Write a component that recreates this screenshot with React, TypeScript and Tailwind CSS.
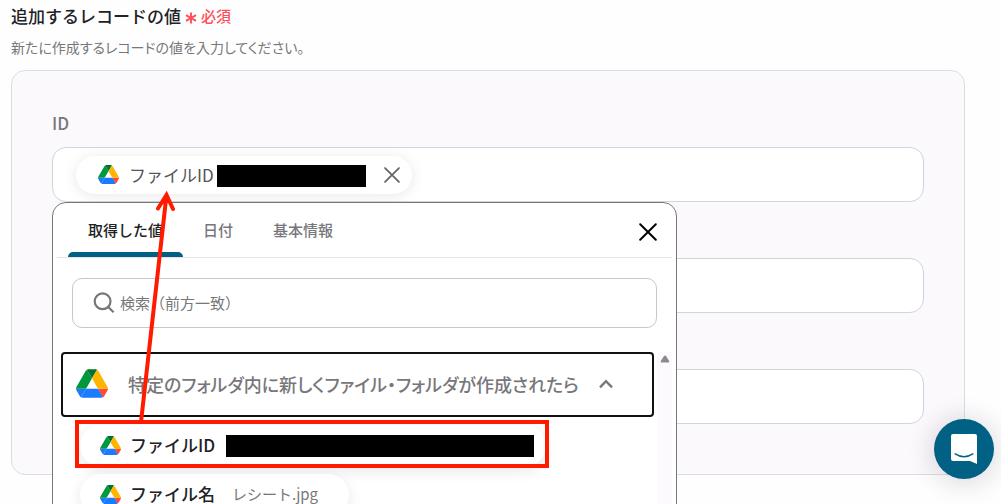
import React from "react";

function DriveIcon({ className }: { className: string }) {
  return (
    <svg viewBox="0 0 87.3 78" className={className} aria-hidden="true">
      <path d="m6.6 66.85 3.85 6.65c.8 1.4 1.95 2.5 3.3 3.3l13.75-23.8h-27.5c0 1.55.4 3.1 1.2 4.5z" fill="#1a7bff" />
      <path d="m43.65 25-13.75-23.8c-1.35.8-2.5 1.9-3.3 3.3l-25.4 44a9.06 9.06 0 0 0 -1.2 4.5h27.5z" fill="#00983f" />
      <path d="m73.55 76.8c1.35-.8 2.5-1.9 3.3-3.3l1.6-2.75 7.65-13.25c.8-1.4 1.2-2.95 1.2-4.5h-27.502l5.852 11.5z" fill="#ff4b35" />
      <path d="m43.65 25 13.75-23.8c-1.35-.8-2.9-1.2-4.5-1.2h-18.5c-1.6 0-3.15.45-4.5 1.2z" fill="#00742d" />
      <path d="m59.8 53h-32.3l-13.75 23.8c1.35.8 2.9 1.2 4.5 1.2h50.8c1.6 0 3.15-.45 4.5-1.2z" fill="#1a7bff" />
      <path d="m73.4 26.5-12.7-22c-.8-1.4-1.95-2.5-3.3-3.3l-13.75 23.8 16.15 28h27.45c0-1.55-.4-3.1-1.2-4.5z" fill="#ffb400" />
    </svg>
  );
}

function CrossIcon({ className }: { className: string }) {
  return (
    <svg viewBox="0 0 18 18" className={className} fill="none" stroke="currentColor" strokeWidth="2" strokeLinecap="round" aria-hidden="true">
      <path d="M1.2 1.2 16.8 16.8M16.8 1.2 1.2 16.8" />
    </svg>
  );
}

function ValuePicker() {
  return (
    <div className="absolute left-0 top-full z-10 h-[400px] w-[625px] rounded-t-[14px] border border-[#77777b] bg-white">
      <div className="mx-1 flex h-[55px] items-stretch border-b border-[#e4e4e8] pl-[11px]">
        <div role="tablist" className="flex grow text-[15px] font-medium text-[#77777b]">
          <button role="tab" aria-selected="true" className="relative px-5 text-[#222226]">
            取得した値
            <span className="absolute inset-x-0 bottom-0 h-[5px] rounded-t-[5px] bg-[#006184]" />
          </button>
          <button role="tab" aria-selected="false" className="px-5">日付</button>
          <button role="tab" aria-selected="false" className="px-5">基本情報</button>
        </div>
        <button aria-label="閉じる" className="flex items-center px-[15px] pt-1 text-black">
          <CrossIcon className="size-[18px]" />
        </button>
      </div>

      <label className="ml-[19px] mr-[19px] mt-5 flex h-[50px] items-center rounded-[10px] border border-[#c8c8cc] pl-5">
        <svg viewBox="0 0 22 22" className="size-[22px] shrink-0" fill="none" stroke="#77777b" strokeWidth="2.2" aria-hidden="true">
          <circle cx="9.6" cy="9.3" r="7.9" />
          <path d="m15.2 15 5.4 5.2" />
        </svg>
        <input
          type="text"
          aria-label="検索"
          placeholder="検索（前方一致）"
          className="ml-[5px] w-full bg-transparent text-[15px] text-[#77777b] outline-none placeholder:text-[#77777b]"
        />
      </label>

      <div className="mt-6 flex">
        <div className="ml-2 grow">
          <button aria-expanded="true" className="flex h-[65px] w-full items-center rounded border-2 border-[#111114] pb-0.5 pl-[13px] text-lg font-medium text-[#77777b] [font-feature-settings:'palt']">
            <DriveIcon className="h-[29px] w-8" />
            <span className="ml-5">特定のフォルダ内に新しくファイル・フォルダが作成されたら</span>
            <svg viewBox="0 0 14 10" className="ml-5 h-[10px] w-[14px]" fill="none" stroke="#77777b" strokeWidth="2.4" aria-hidden="true">
              <path d="M1 8.4 7 2.2l6 6.2" />
            </svg>
          </button>
          <ul className="ml-[19px] mt-2 flex flex-col items-start gap-[7px] leading-4">
            <li>
              <button className="flex h-[42px] items-center rounded-full bg-white pb-0.5 pl-5 pr-3 shadow-[0_4px_14px_rgba(60,30,50,0.1)]">
                <DriveIcon className="h-[19px] w-[21px]" />
                <span className="ml-[9px] text-[17px] font-medium leading-4 text-[#222226]">ファイルID</span>
                <span className="ml-[11px] mt-0.5 h-[22px] w-[308px] bg-black" />
              </button>
            </li>
            <li>
              <button className="flex h-[42px] items-center rounded-full bg-white pb-0.5 pl-5 pr-[31px] shadow-[0_4px_14px_rgba(60,30,50,0.1)]">
                <DriveIcon className="h-[19px] w-[21px]" />
                <span className="ml-[9px] text-[17px] font-medium leading-4 text-[#222226]">ファイル名</span>
                <span className="ml-[17px] text-[15px] leading-4 text-[#77777b]">レシート.jpg</span>
              </button>
            </li>
          </ul>
        </div>
        <div className="ml-[3px] mr-1 flex h-[200px] w-[15px] justify-center bg-[#fcfafd] pt-[3px]">
          <svg viewBox="0 0 10 8" className="h-2 w-[10px]" aria-hidden="true">
            <path d="M5 .5Q5.600 .5 6 1L9.200 6Q9.700 7.500 8.500 7.500H1.500Q.3 7.500 .8 6L4 1Q4.400 .5 5 .5Z" fill="#8b8b8e" />
          </svg>
        </div>
      </div>
    </div>
  );
}

const inputBox = "h-[55px] w-full rounded-[14px] border border-[#d0d5dd] bg-white";

export default function App() {
  return (
    <main className="relative h-screen overflow-hidden bg-[#fefefe] pl-[11px] pr-9 pt-1 [font-family:'Noto_Sans_CJK_JP',sans-serif]">
      <h1 className="flex items-center gap-1 text-[17px] font-medium leading-6 text-[#222226]">
        追加するレコードの値
        <span className="flex items-center gap-1 text-[15px] text-[#ff4f5b]">
          <svg viewBox="0 0 12 12" className="mt-1 size-3" stroke="currentColor" strokeWidth="1.9" aria-hidden="true">
            <path d="M6 .5v11M1 3.200l10 5.600M11 3.200 1 8.800" />
          </svg>
          必須
        </span>
      </h1>
      <p className="mt-[9px] text-[14px] leading-5 text-[#77777b] [font-feature-settings:'palt']">新たに作成するレコードの値を入力してください。</p>

      <section className="mt-[13px] rounded-[14px] border border-[#dcdde4] bg-[#fbf9fc] px-10 pb-[50px] pt-10">
        <label htmlFor="record-id" className="block text-[17px] font-medium leading-6 text-[#77777b]">ID</label>
        <div className="mt-3 flex flex-col gap-14">
          <div className="relative">
            <div className={`${inputBox} flex items-center pl-[23px]`}>
              <div className="flex h-[38px] shrink-0 items-center rounded-full bg-white pl-[22px] pr-3 shadow-[0_2px_14px_rgba(60,30,50,0.1)]">
                <DriveIcon className="h-[19px] w-[21px]" />
                <span className="ml-[10px] text-[17px] text-[#55555a]">ファイルID</span>
                <span className="ml-[3px] mt-[2px] h-[22px] w-[149px] bg-black" />
                <button aria-label="削除" className="ml-[18px] text-[#66666a]">
                  <CrossIcon className="size-4" />
                </button>
              </div>
              <input id="record-id" type="text" className="min-w-0 grow bg-transparent outline-none" />
            </div>
            <ValuePicker />
          </div>
          <input type="text" aria-label="値 2" className={inputBox} />
          <input type="text" aria-label="値 3" className={inputBox} />
        </div>
      </section>

      <div className="pointer-events-none absolute left-[75px] top-[420px] z-20 h-12 w-[474px] border-4 border-[#ff1a00]" />
      <svg viewBox="0 0 50 240" className="pointer-events-none absolute left-[130px] top-[185px] z-20 h-[240px] w-[50px]" fill="none" stroke="#ff1a00" strokeWidth="4" strokeLinecap="round" aria-hidden="true">
        <path d="M11 237 36.500 10M28 23.500 36.500 10l6.500 14" />
      </svg>

      <button aria-label="チャットを開く" className="fixed bottom-[25px] right-[7px] z-30 flex size-[60px] items-center justify-center rounded-full bg-[#006184] shadow-[0_2px_28px_rgba(40,20,50,0.2)]">
        <svg viewBox="0 0 28 32" className="h-8 w-7" aria-hidden="true">
          <path d="M3 1h22a2 2 0 0 1 2 2v28l-7-3H3a2 2 0 0 1-2-2V3a2 2 0 0 1 2-2Z" fill="#fff" />
          <path d="M5.200 20.800q8.800 5.800 17.600 0" fill="none" stroke="#006184" strokeWidth="1.500" strokeLinecap="round" />
        </svg>
      </button>
    </main>
  );
}
